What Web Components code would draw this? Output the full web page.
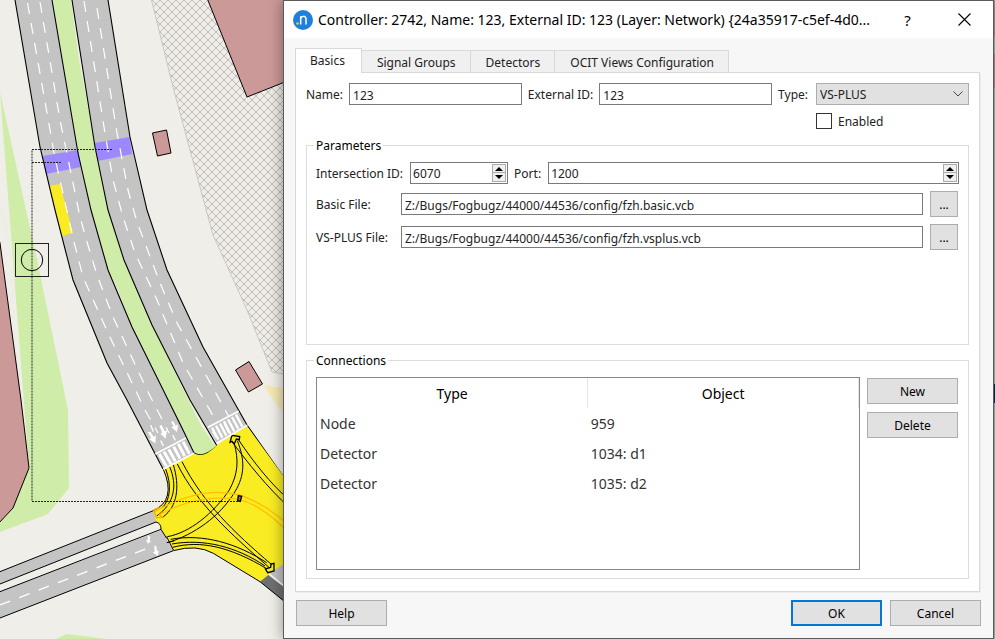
<!DOCTYPE html>
<html lang="en">
<head>
<meta charset="utf-8">
<title>Controller</title>
<style>
html, body { margin: 0; height: 100%; }
body { font: 12px/16px "Noto Sans", sans-serif; color: #222; background: #f0eee8; overflow: hidden; }
</style>
</head>
<body>
<controller-app></controller-app>

<template id="t-map">
<style>
:host { display: block; overflow: hidden; }
svg { display: block; width: 100%; height: 100%; }
</style>
<svg viewBox="0 0 995 639" preserveAspectRatio="xMinYMin slice" aria-hidden="true">
<defs>
<pattern id="hatch" width="8" height="8" patternUnits="userSpaceOnUse"><path d="M-1-1L9 9M-1 9L9-1" stroke="#bcbcba" stroke-width="1" fill="none"/></pattern>
</defs>
<rect width="995" height="639" fill="#f0eee8"/>
<path fill="#cfeda9" d="M0 92L26 210L34 245L68 410L69 488L48 514L0 532V208L2 210L10 247L15 343L29 468z"/>
<path fill="#cfeda9" d="M55 639L67 634L107 639z"/>
<path fill="#f0eee8" d="M0 208L2 210L10 247L15 343L24 420L29 468L0 300z"/>
<path fill="#cb9998" stroke="#000" d="M-2 236L0 243L21 400L29 468L13 508L-2 524z"/>
<path fill="#efede5" d="M151 0L173 87L209 220L213 235L247 310L272 372L290 375V0z"/>
<path fill="url(#hatch)" stroke="#c8c8c8" d="M151-2L173 87L207 213L213 235L247 310L272 372L290 375V-2z"/>
<path fill="#cb9998" stroke="#000" d="M207-2L247 97L290 80V-2z"/>
<path fill="#cb9998" stroke="#000" d="M152.500 133L166.500 130L171 153L157.500 156z"/>
<path fill="#cb9998" stroke="#000" d="M235.500 370L249 361.500L262.500 384L248.500 392z"/>
<path fill="#f5e8b5" d="M263 385L290 389V423z"/>
<!-- green median -->
<path fill="#cfeda9" d="M52 0H71L79 60L88 107L95 147L110 210L124 260L152 325L182 387L202 427L216 447L210 454L200 456L194 453L166 400L132 327L117 287L107 270L91 210L78 153z"/>
<!-- carriageways -->
<path fill="#c4c4c4" d="M15 0L40 147L55 210L73 280L107 363L127 400L163 469L194 453L183 430L132 327L108 270L91 210L78 153L52 0zM72 0L95 147L108 210L124 260L152 325L190 400L217 443L247 425L203 347L167 270L147 210L130 137L108 0z"/>
<path fill="#9d88ff" d="M42.500 156L78 150L81 167L46 174zM94.500 143L129.500 137L132 154L98 161z"/>
<path fill="#f9ec22" d="M49 186L60 184L73 233L62 236z"/>
<g fill="none" stroke="#fff" stroke-width="1.200" stroke-dasharray="11 9.300">
<path d="M27.500 3L55 158L73 238L83 277L108 333L145 410L158 433"/>
<path d="M40 2L60 120L72 178L80 217L87 242L97 275L113 317L147 390L169 433"/>
<path d="M84 1L105 133L113 180L123 217L135 253L157 300L183 363L216 421"/>
<path d="M97 8L117 133L128 190L135 215L140 230L160 283L177 323L207 377L229 417"/>
</g>
<g fill="none" stroke="#000" stroke-width="1.100">
<path d="M15 0L40 147L55 210L73 280L107 363L127 400L163 469"/>
<path d="M52 0L78 153L91 210L108 270L132 327L183 430L194 453Q203 459 217 446L190 400L152 325L124 260L108 210L95 147L72 0"/>
<path d="M108 0L130 137L147 210L167 270L203 347L247 425L290 486"/>
</g>
<!-- junction and its arms, drawn on a three times finer grid -->
<g transform="translate(0 400) scale(.33333)">
<path fill="#c4c4c4" d="M0 515L460 332L470 366L0 552zM0 575L485 390L520 452L0 654z"/>
<path fill="#f9ec22" d="M490 208L582 160Q610 178 652 134L740 77L870 255V490L780 545L640 460Q590 432 520 452L500 415L483 388Q484 370 468 366L460 332Q530 300 490 208z"/>
<path fill="#c2c2c2" d="M805 522L870 480V575z"/><path fill="#6f7072" d="M780 545L805 525L870 575V618z"/>
<path d="M808 522L870 572" stroke="#fff" stroke-width="4"/>
<g fill="none" stroke="#000" stroke-width="3">
<path d="M0 515L460 332Q530 300 490 208M0 552L468 366Q484 370 483 388L0 575M483 388L500 415M0 654L520 452Q590 432 640 460L780 545L870 618"/>
<path d="M497 207C515 255 512 300 485 325M509 200C532 255 525 310 470 348M520 194C540 260 532 320 490 350"/>
<path d="M532 192C590 310 690 400 808 503M546 185C610 310 700 395 815 494"/>
<path d="M502 410C570 398 640 340 688 270C715 220 716 180 703 132M505 427C580 405 660 350 705 275C735 225 735 180 712 122"/>
<path d="M695 124C745 190 800 260 870 325M716 120C760 185 810 250 870 302"/>
<path d="M512 418C610 400 710 430 800 488M518 442C600 420 690 440 800 506M516 432C610 415 710 440 795 498M500 428L522 423M500 410L520 450"/>
<path stroke-width="4" d="M690 127L696 106L719 110L718 119L709 117L703 132L696 124zM796 507L803 518L822 513L822 490L813 492L812 502z"/>
</g>
<path fill="none" stroke="#ffc000" stroke-width="4" d="M465 335C560 280 640 265 718 285C780 305 825 340 870 378M485 340C580 292 650 290 715 298C770 310 820 350 870 402"/>
<path fill="none" stroke="#f8a800" stroke-width="4" d="M478 323L461 330L469 353L488 352L478 344L488 336"/>
<path fill="#777" stroke="#000" stroke-width="4" d="M715 287L725 289L721 304L713 302z"/>
<g stroke="#fff" fill="none">
<path stroke-width="5" d="M466 162L558 114M490 207L582 160M624 82L716 34M650 130L742 76"/>
<path stroke-width="9" d="M478 162L499 199M492 155L513 192M506 148L526 184M521 140L540 176M535 132L554 168M549 125L568 161"/>
<path stroke-width="7" d="M636 83L655 119M648 77L667 113M660 71L679 107M672 64L691 101M684 58L703 94M696 51L715 87M708 44L727 80"/>
<path stroke-width="4" stroke-dasharray="33 29" d="M0 615L455 440"/>
<path stroke-width="4" d="M482 122L490 138M518 105L526 121M452 75L460 95M638 95L648 112M672 70L686 99"/>
</g>
<path fill="#fff" d="M443 97L451 95L461 110L468 106L466 130L447 117L454 114zM478 78L485 75L494 94L501 91L497 116L481 101L487 98zM513 66L520 63L527 77L534 73L531 96L514 82L521 79zM443 405L451 410L449 422L453 424L444 431L438 420L443 420zM463 436L470 440L470 451L476 453L473 468L458 457L464 455z"/>
</g>
<g stroke="#222" fill="none" stroke-dasharray="2 1">
<path d="M112 149.500H32V501.500H238M32 162.500H62"/>
</g>
<g fill="none" stroke="#222"><rect x="15.500" y="243.500" width="33" height="33"/><circle cx="32" cy="260" r="10.700" stroke="#000"/></g>
<!-- what shows past the right edge of the dialog -->
<path fill="#bbb9b4" d="M980 0H995V639H980z"/><path fill="#c08e8f" d="M980 0H995V37H980zM980 54H995V88H980z"/><path fill="#16284a" d="M980 384H995V403H980z"/>
<path fill="#8b8590" d="M283 636H980V639H283z"/><path fill="#a89b10" d="M494 636H516V639H494z"/>
</svg>
</template>

<template id="t-titlebar">
<style>
:host { display: flex; align-items: center; height: 37px; background: #fff; color: #000; padding: 0 0 0 9px; }
.logo { flex: none; width: 20px; height: 20px; }
h1 { flex: 1; min-width: 0; margin: 0 0 0 5px; font: 14px/20px "Noto Sans", sans-serif; white-space: nowrap; }
button { flex: none; width: 57px; height: 37px; padding: 0; border: 0; background: none; color: #000; font: 15px/20px "Noto Sans", sans-serif; }
button svg { display: block; margin: auto; }
</style>
<svg class="logo" viewBox="0 0 20 20" aria-hidden="true"><circle cx="10" cy="10" r="10" fill="#1f80dc"/><circle cx="4.500" cy="13.500" r="1.200" fill="#ffd21f"/><path d="M7.700 14.500V6.200M7.700 9C8 5.800 13 5.200 13 9V14.500" fill="none" stroke="#fff" stroke-width="1.500"/></svg>
<h1><slot></slot></h1>
<button type="button">?</button>
<button type="button" aria-label="Close"><svg width="13" height="13" viewBox="0 0 13 13"><path d="M.5.5L12.500 12.500M12.500.5L.5 12.500" stroke="#000" stroke-width="1.100"/></svg></button>
</template>

<template id="t-tab">
<style>
:host { display: block; }
button { display: block; height: 22px; border: 1px solid #d9d9d9; border-left: 0; border-bottom: 0; background: #f0f0f0; padding: 2px 14px 0 15px; font: inherit; color: inherit; white-space: nowrap; }
:host([selected]) { margin-bottom: -1px; }
:host([selected]) button { height: 25px; background: #fff; border-left: 1px solid #d9d9d9; padding: 0 16px 0 14px; }
</style>
<button type="button" role="tab"><slot></slot></button>
</template>

<template id="t-button">
<style>
:host { display: block; width: 91px; height: 26px; }
:host([compact]) { width: 28px; }
button { display: block; width: 100%; height: 100%; box-sizing: border-box; padding: 2px 0 0; border: 1px solid #adadad; background: #e1e1e1; color: #000; font: inherit; }
:host([default]) button { border: 2px solid #0078d7; }
</style>
<button type="button"><slot></slot></button>
</template>

<template id="t-text">
<style>
:host { display: flex; align-items: center; gap: var(--label-gap, 6px); min-width: 0; }
label { flex: none; width: var(--label-width, auto); padding-top: 2px; white-space: nowrap; }
input { flex: 1; min-width: 0; width: 0; height: 22px; box-sizing: border-box; border: 1px solid #7a7a7a; background: #fff; padding: 2px 3px 0; font: inherit; color: inherit; border-radius: 0; }
</style>
<label for="f"></label><input id="f" type="text">
</template>

<template id="t-spin">
<style>
:host { display: flex; align-items: center; gap: 7px; min-width: 0; }
label { flex: none; padding-top: 2px; white-space: nowrap; }
.box { flex: 1; display: flex; width: var(--field-width, auto); min-width: 0; height: 22px; box-sizing: border-box; border: 1px solid #7a7a7a; background: #fff; padding: 1px; }
input { flex: 1; min-width: 0; width: 0; border: 0; background: none; padding: 2px 1px 0; font: inherit; color: inherit; appearance: textfield; }
input::-webkit-inner-spin-button { appearance: none; }
.arrows { display: grid; grid-template-rows: 1fr 1fr; width: 14px; }
button { min-height: 0; padding: 0; border: 1px solid #acacac; background: #f0f0f0; display: grid; place-items: center; }
button + button { border-top: 0; }
</style>
<label for="f"></label>
<div class="box"><input id="f" type="number"><div class="arrows">
<button type="button" tabindex="-1" aria-label="Increase"><svg width="8" height="4" viewBox="0 0 8 4"><path d="M0 4L4 0L8 4z"/></svg></button>
<button type="button" tabindex="-1" aria-label="Decrease"><svg width="8" height="4" viewBox="0 0 8 4"><path d="M0 0L4 4L8 0z"/></svg></button>
</div></div>
</template>

<template id="t-select">
<style>
:host { display: flex; align-items: center; gap: 8px; }
label { flex: none; padding-top: 2px; }
.box { display: grid; width: 153px; height: 22px; }
.box > * { grid-area: 1 / 1; }
select { appearance: none; box-sizing: border-box; width: 100%; height: 22px; border: 1px solid #adadad; border-radius: 0; background: #e1e1e1; padding: 2px 3px 0; font: inherit; color: inherit; }
svg { place-self: center end; margin-right: 6px; pointer-events: none; }
</style>
<label for="f">Type:</label>
<div class="box"><select id="f"><option>VS-PLUS</option></select><svg width="10" height="6" viewBox="0 0 10 6"><path d="M.5.5L5 5L9.500.5" fill="none" stroke="#444"/></svg></div>
</template>

<template id="t-check">
<style>
:host { display: flex; align-items: center; gap: 6px; height: 16px; }
label { padding-top: 2px; }
input { appearance: none; margin: 0; width: 16px; height: 16px; box-sizing: border-box; border: 1px solid #333; background: #fff; }
</style>
<input id="f" type="checkbox"><label for="f"><slot></slot></label>
</template>

<template id="t-group">
<style>
:host { display: flex; min-width: 0; }
fieldset { flex: 1; display: flex; min-width: 0; margin: 0; padding: 8px 9px; border: 1px solid #dcdcdc; }
legend { margin-left: -2px; padding: 2px 2px 0; color: #000; }
.body { flex: 1; min-width: 0; display: flex; flex-direction: column; }
</style>
<fieldset><legend></legend><div class="body"><slot></slot></div></fieldset>
</template>

<template id="t-table">
<style>
:host { display: block; box-sizing: border-box; border: 1px solid #828790; background: #fff; }
table { width: 100%; table-layout: fixed; border-collapse: collapse; font: 14px/20px "Noto Sans", sans-serif; }
th, td { height: 30px; padding: 2px 3px 0; box-sizing: border-box; }
th { font-weight: 400; color: #000; text-align: center; border-right: 1px solid #e5e5e5; }
td { text-align: left; color: #333; }
</style>
<table>
<thead><tr><th>Type</th><th>Object</th></tr></thead>
<tbody><tr><td>Node</td><td>959</td></tr><tr><td>Detector</td><td>1034: d1</td></tr><tr><td>Detector</td><td>1035: d2</td></tr></tbody>
</table>
</template>

<template id="t-dialog">
<style>
:host { display: flex; flex-direction: column; box-sizing: border-box; border: 1px solid #5c5a5c; background: #f7f7f7; box-shadow: 0 0 14px rgba(0,0,0,.4); }
.tabs { display: flex; align-items: flex-end; margin: 10px 11px 0; position: relative; z-index: 1; }
.pane { flex: 1; display: flex; flex-direction: column; margin: 0 13px 0 11px; padding: 10px; padding-bottom: 12px; background: #fff; border: 1px solid #d9d9d9; box-shadow: 1px 1px #ededed; }
.row { display: flex; align-items: center; gap: 6px; }
.grow { flex: 1 1 auto; }
.enabled { justify-content: flex-end; margin: 8px 0 7px; }
.enabled > * { width: 153px; }
.params { min-height: 209px; }
.stack { display: flex; flex-direction: column; gap: 7px; }
.file { --label-width: 79px; gap: 7px; margin-right: 1px; }
.spin { --field-width: 98px; }
.conn { flex: 1; margin-top: 6px; }
.cols { flex: 1; display: flex; gap: 7px; }
.actions { display: flex; flex-direction: column; gap: 8px; padding-top: 1px; margin-right: 1px; }
.footer { display: flex; gap: 8px; padding: 8px 12px 12px; }
.footer .help { margin-right: auto; }
</style>
<title-bar>Controller: 2742, Name: 123, External ID: 123 (Layer: Network) {24a35917-c5ef-4d0...</title-bar>
<div class="tabs" role="tablist"><tab-button selected>Basics</tab-button><tab-button>Signal Groups</tab-button><tab-button>Detectors</tab-button><tab-button>OCIT Views Configuration</tab-button></div>
<div class="pane">
<div class="row"><text-field class="grow" label="Name:" value="123"></text-field><text-field class="grow" label="External ID:" value="123"></text-field><type-select></type-select></div>
<div class="row enabled"><check-box>Enabled</check-box></div>
<group-box class="params" label="Parameters"><div class="stack">
<div class="row"><spin-field class="spin" label="Intersection ID:" value="6070"></spin-field><spin-field class="grow" label="Port:" value="1200"></spin-field></div>
<div class="row file"><text-field class="grow" label="Basic File:" value="Z:/Bugs/Fogbugz/44000/44536/config/fzh.basic.vcb"></text-field><push-button compact>...</push-button></div>
<div class="row file"><text-field class="grow" label="VS-PLUS File:" value="Z:/Bugs/Fogbugz/44000/44536/config/fzh.vsplus.vcb"></text-field><push-button compact>...</push-button></div>
</div></group-box>
<group-box class="conn" label="Connections"><div class="cols"><connection-table class="grow"></connection-table><div class="actions"><push-button>New</push-button><push-button>Delete</push-button></div></div></group-box>
</div>
<div class="footer"><push-button class="help">Help</push-button><push-button default>OK</push-button><push-button>Cancel</push-button></div>
</template>

<template id="t-app">
<style>
:host { display: grid; height: 100%; min-height: 100vh; }
city-map, controller-dialog { grid-area: 1 / 1; min-width: 0; min-height: 0; }
controller-dialog { margin: 0 1px 0 283px; z-index: 1; }
</style>
<city-map></city-map>
<controller-dialog></controller-dialog>
</template>

<script>
function define(name, templateId, setup) {
  customElements.define(name, class extends HTMLElement {
    constructor() {
      super();
      this.attachShadow({ mode: "open" }).append(document.getElementById(templateId).content.cloneNode(true));
    }
    connectedCallback() { if (setup) setup(this, this.shadowRoot); }
  });
}
function fill(el, root) {
  root.querySelector("label").textContent = el.getAttribute("label");
  root.querySelector("input").value = el.getAttribute("value");
}
define("city-map", "t-map");
define("title-bar", "t-titlebar");
define("tab-button", "t-tab", (el, root) => root.querySelector("button").setAttribute("aria-selected", el.hasAttribute("selected")));
define("push-button", "t-button");
define("text-field", "t-text", fill);
define("spin-field", "t-spin", (el, root) => {
  fill(el, root);
  const input = root.querySelector("input");
  const [up, down] = root.querySelectorAll("button");
  up.onclick = () => input.stepUp();
  down.onclick = () => input.stepDown();
});
define("type-select", "t-select");
define("check-box", "t-check");
define("group-box", "t-group", (el, root) => { root.querySelector("legend").textContent = el.getAttribute("label"); });
define("connection-table", "t-table");
define("controller-dialog", "t-dialog");
define("controller-app", "t-app");
</script>
</body>
</html>
